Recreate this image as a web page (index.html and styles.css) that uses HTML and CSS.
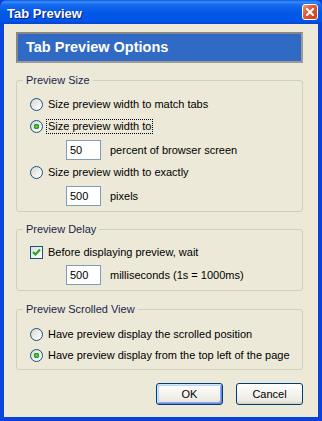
FILE: index.html
```html
<!DOCTYPE html>
<html lang="en">
<head>
  <meta charset="UTF-8">
  <title>Tab Preview</title>
  <link rel="stylesheet" href="styles.css">
</head>
<body>
  <div class="window">
    <div class="titlebar">
      <span class="title">Tab Preview</span>
      <span class="close">
        <svg width="8" height="8" viewBox="0 0 8 8"><path d="M1 1 L7 7 M7 1 L1 7" stroke="#fff" stroke-width="2" stroke-linecap="square"/></svg>
      </span>
    </div>
    <div class="frame">
      <div class="banner">Tab Preview Options</div>

      <fieldset class="group">
        <legend>Preview Size</legend>
        <div class="rows size">
          <label class="row first"><input type="radio" name="size"><span class="text">Size preview width to match tabs</span></label>
          <label class="row"><input type="radio" name="size" checked><span class="text focus">Size preview width to</span></label>
          <div class="row sub"><input class="num" type="text" value="50"><span>percent of browser screen</span></div>
          <label class="row"><input type="radio" name="size"><span class="text">Size preview width to exactly</span></label>
          <div class="row sub"><input class="num" type="text" value="500"><span>pixels</span></div>
        </div>
      </fieldset>

      <fieldset class="group delay">
        <legend>Preview Delay</legend>
        <div class="rows">
          <label class="row first">
            <span class="check"><svg width="9" height="9" viewBox="0 0 9 9"><path d="M1 4 L3.5 6.5 L8 1.5" fill="none" stroke="#21a121" stroke-width="2"/></svg></span>
            <span class="text">Before displaying preview, wait</span>
          </label>
          <div class="row sub"><input class="num" type="text" value="500"><span>milliseconds (1s = 1000ms)</span></div>
        </div>
      </fieldset>

      <fieldset class="group scroll">
        <legend>Preview Scrolled View</legend>
        <div class="rows">
          <label class="row first"><input type="radio" name="scroll"><span class="text">Have preview display the scrolled position</span></label>
          <label class="row"><input type="radio" name="scroll" checked><span class="text">Have preview display from the top left of the page</span></label>
        </div>
      </fieldset>

      <div class="buttons">
        <button class="btn default">OK</button>
        <button class="btn">Cancel</button>
      </div>
    </div>
  </div>
</body>
</html>
```

FILE: styles.css
```css
body {
  margin: 0;
  font-family: 'Liberation Sans', Arial, sans-serif;
  font-size: 11px;
  color: #000;
}
.window {
  width: 322px;
  height: 421px;
  display: flex;
  flex-direction: column;
  background: #0842d8;
}
.titlebar {
  height: 24px;
  flex: none;
  display: flex;
  align-items: center;
  justify-content: space-between;
  padding: 0 4px 0 7px;
  box-sizing: border-box;
  border-radius: 7px 7px 0 0;
  background: linear-gradient(to bottom, #0a5ce6 0%, #3b8cf6 8%, #1769ee 20%, #0058e6 55%, #0256e8 85%, #0444d6 100%);
}
.title {
  color: #fff;
  font-weight: bold;
  font-size: 13px;
  padding-top: 2px;
  text-shadow: 1px 1px #0a1883;
}
.close {
  width: 16px;
  height: 16px;
  box-sizing: border-box;
  border: 1px solid #fff;
  border-radius: 3px;
  background: linear-gradient(135deg, #f09a7c 0%, #e35a35 40%, #c8401e 100%);
  display: flex;
  align-items: center;
  justify-content: center;
}
.frame {
  flex: 1;
  background: #ece9d8;
  border: 4px solid #0842d8;
  border-top: none;
  border-left-color: #0b46dc;
  padding: 8px 15px 0 12px;
}
.banner {
  height: 31px;
  box-sizing: border-box;
  border: 2px solid #878787;
  border-right-color: #9a9a9a;
  border-bottom-color: #9a9a9a;
  background: #316ac5;
  color: #fff;
  font-weight: bold;
  font-size: 14.5px;
  line-height: 27px;
  padding-left: 8px;
  margin-bottom: 10px;
}
.group {
  margin: 0;
  padding: 0;
  border: 1px solid #d0d0bf;
  border-radius: 3px;
  min-width: 0;
}
.group legend {
  margin-left: 6px;
  padding: 0 3px;
  line-height: 14px;
  color: #1b1f4a;
}
.delay {
  margin-top: 10px;
}
.scroll {
  margin-top: 11px;
}
.rows {
  padding: 6px 0 4px 13px;
}
.delay .rows {
  padding-top: 5px;
}
.scroll .rows {
  padding: 7px 0 3px 13px;
}
.row {
  display: flex;
  align-items: center;
  height: 23px;
}
.row.first {
  height: 22px;
}
.scroll .row {
  height: 21px;
}
.scroll .row.first {
  height: 22px;
}
.row .text {
  border: 1px dotted transparent;
  padding: 0 1px;
  line-height: 13px;
}
.row .text.focus {
  border-color: #000;
}
.row.sub {
  padding-left: 36px;
}
.row.sub span {
  margin-left: 9px;
}
input[type=radio] {
  appearance: none;
  -webkit-appearance: none;
  width: 13px;
  height: 13px;
  margin: 0 3px 0 0;
  box-sizing: border-box;
  border: 1px solid #1c5180;
  border-radius: 50%;
  background: linear-gradient(135deg, #d6d5cc 0%, #f2f2ee 60%, #fff 100%);
}
input[type=radio]:checked {
  background: radial-gradient(circle, #6fe06a 0, #21a121 2px, #1e8f1e 2.6px, transparent 3px),
    linear-gradient(135deg, #d6d5cc 0%, #f2f2ee 60%, #fff 100%);
}
.check {
  width: 13px;
  height: 13px;
  box-sizing: border-box;
  border: 1px solid #1c5180;
  background: linear-gradient(135deg, #dcdcd7 0%, #fff 100%);
  display: flex;
  align-items: center;
  justify-content: center;
  margin-right: 3px;
}
.num {
  width: 35px;
  height: 20px;
  box-sizing: border-box;
  margin: 0;
  border: 1px solid #7f9db9;
  padding: 0 3px;
  font-family: 'Liberation Sans', Arial, sans-serif;
  font-size: 11px;
  background: #fff;
  outline: none;
}
.buttons {
  display: flex;
  justify-content: flex-end;
  gap: 13px;
  margin-top: 13px;
}
.btn {
  width: 67px;
  height: 22px;
  box-sizing: border-box;
  border: 1px solid #003c74;
  border-radius: 3px;
  background: linear-gradient(to bottom, #fff 0%, #f4f3ee 50%, #ece9e0 85%, #d6d0c5 100%);
  font-family: 'Liberation Sans', Arial, sans-serif;
  font-size: 11px;
  color: #000;
  padding: 0;
}
.btn.default {
  box-shadow: inset 1px 1px #cee7ff, inset -1px -1px #6982ee, inset 2px 2px #bcd4f6, inset -2px -2px #89ade4;
}
```
